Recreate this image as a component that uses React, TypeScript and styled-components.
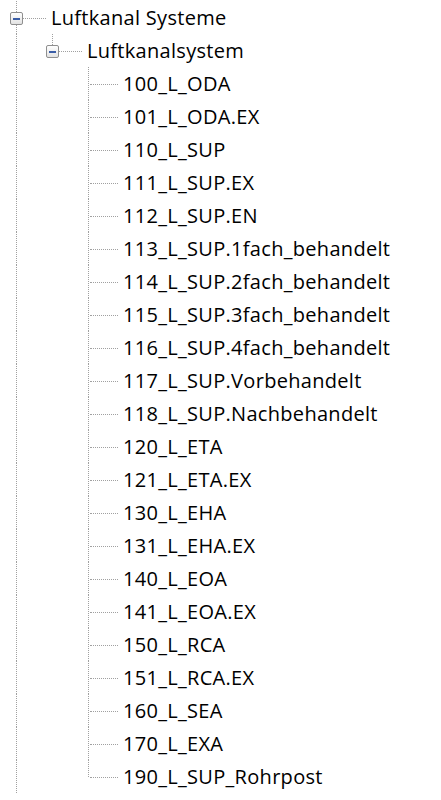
import React from 'react';
import styled, { createGlobalStyle } from 'styled-components';

interface Node {
  label: string;
  children?: Node[];
}

interface Row {
  label: string;
  level: number;
  guides: boolean[];
  last: boolean;
  hasChildren: boolean;
}

const children = [
  '100_L_ODA',
  '101_L_ODA.EX',
  '110_L_SUP',
  '111_L_SUP.EX',
  '112_L_SUP.EN',
  '113_L_SUP.1fach_behandelt',
  '114_L_SUP.2fach_behandelt',
  '115_L_SUP.3fach_behandelt',
  '116_L_SUP.4fach_behandelt',
  '117_L_SUP.Vorbehandelt',
  '118_L_SUP.Nachbehandelt',
  '120_L_ETA',
  '121_L_ETA.EX',
  '130_L_EHA',
  '131_L_EHA.EX',
  '140_L_EOA',
  '141_L_EOA.EX',
  '150_L_RCA',
  '151_L_RCA.EX',
  '160_L_SEA',
  '170_L_EXA',
  '190_L_SUP_Rohrpost',
];

const tree: Node = {
  label: 'Luftkanal Systeme',
  children: [{ label: 'Luftkanalsystem', children: children.map((label) => ({ label })) }],
};

const flatten = (node: Node, level: number, guides: boolean[], last: boolean, out: Row[]) => {
  const hasChildren = !!node.children && node.children.length > 0;
  out.push({ label: node.label, level, guides, last, hasChildren });
  node.children?.forEach((child, i) => {
    const isLast = i === node.children!.length - 1;
    flatten(child, level + 1, [...guides, !last], isLast, out);
  });
  return out;
};

const rows = flatten(tree, 0, [], false, []);

const GlobalStyle = createGlobalStyle`
  html, body {
    margin: 0;
    background: #ffffff;
  }
`;

const Tree = styled.ul`
  list-style: none;
  margin: 0;
  padding: 1px 0 0 0;
  font-family: 'Open Sans', 'Noto Sans', sans-serif;
  font-size: 20px;
  letter-spacing: 0.3px;
  color: #000;
`;

const Item = styled.li`
  display: flex;
  align-items: stretch;
  height: 33px;
`;

const Guide = styled.div<{ $line: boolean }>`
  position: relative;
  width: 36px;
  flex: none;

  &::before {
    content: '';
    display: ${(p) => (p.$line ? 'block' : 'none')};
    position: absolute;
    left: 16px;
    top: 0;
    bottom: 0;
    border-left: 1px dotted #a0a0a0;
  }
`;

const Connector = styled.div<{ $last: boolean }>`
  position: relative;
  width: 50px;
  flex: none;

  &::before {
    content: '';
    position: absolute;
    left: 16px;
    top: 0;
    height: ${(p) => (p.$last ? '17px' : '100%')};
    border-left: 1px dotted #a0a0a0;
  }

  &::after {
    content: '';
    position: absolute;
    left: 18px;
    top: 17px;
    width: 28px;
    border-top: 1px dotted #a0a0a0;
  }
`;

const ExpandBox = styled.span`
  position: absolute;
  left: 10px;
  top: 11px;
  width: 11px;
  height: 11px;
  border: 1px solid #8f8f8f;
  border-radius: 2px;
  background: linear-gradient(#ffffff, #e2e2e2);
  z-index: 1;

  &::after {
    content: '';
    position: absolute;
    left: 2px;
    top: 5px;
    width: 7px;
    height: 2px;
    background: #3a5da6;
  }
`;

const Label = styled.span`
  display: flex;
  align-items: center;
  padding-left: 1px;
  white-space: nowrap;
  line-height: 1;
`;

export default function App() {
  return (
    <>
      <GlobalStyle />
      <Tree>
        {rows.map((row, i) => (
          <Item key={i}>
            {row.guides.map((line, g) => (
              <Guide key={g} $line={line} />
            ))}
            <Connector $last={row.last}>{row.hasChildren && <ExpandBox />}</Connector>
            <Label>{row.label}</Label>
          </Item>
        ))}
      </Tree>
    </>
  );
}
